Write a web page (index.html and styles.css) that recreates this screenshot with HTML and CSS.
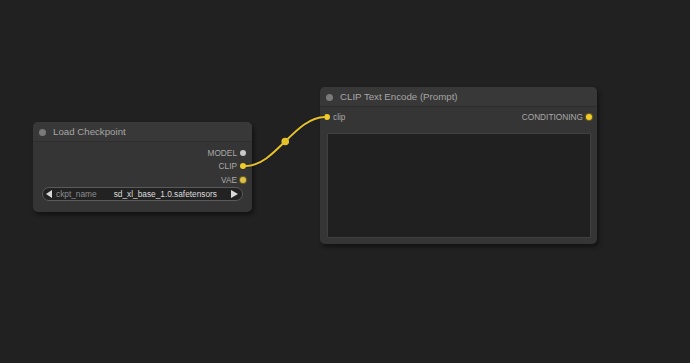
FILE: index.html
```html
<!DOCTYPE html>
<html>
<head>
<meta charset="utf-8">
<link rel="stylesheet" href="styles.css">
</head>
<body>
<div class="canvas">
  <div class="node node-ckpt">
    <div class="title"><span class="title-dot"></span><span class="title-text">Load Checkpoint</span></div>
    <div class="body">
      <div class="outputs">
        <div class="slot out"><span class="label">MODEL</span><span class="dot dot-model"></span></div>
        <div class="slot out"><span class="label">CLIP</span><span class="dot dot-clip"></span></div>
        <div class="slot out"><span class="label">VAE</span><span class="dot dot-vae"></span></div>
      </div>
      <div class="widget">
        <span class="arrow arrow-left"></span>
        <span class="w-name">ckpt_name</span>
        <span class="w-value">sd_xl_base_1.0.safetensors</span>
        <span class="arrow arrow-right"></span>
      </div>
    </div>
  </div>

  <div class="node node-clip">
    <div class="title"><span class="title-dot"></span><span class="title-text">CLIP Text Encode (Prompt)</span></div>
    <div class="body body-clip">
      <div class="io-row">
        <div class="slot in"><span class="dot dot-clip"></span><span class="label">clip</span></div>
        <div class="slot out"><span class="label">CONDITIONING</span><span class="dot dot-cond"></span></div>
      </div>
      <div class="textarea"></div>
    </div>
  </div>

  <svg class="links" width="690" height="363" viewBox="0 0 690 363">
    <path d="M246 166 C 275 166, 295 117, 325 117" fill="none" stroke="#1a1a1a" stroke-width="4" opacity="0.5"/>
    <path d="M246 166 C 275 166, 295 117, 325 117" fill="none" stroke="#e6c229" stroke-width="2"/>
    <circle cx="285.2" cy="141.5" r="3.8" fill="#e6c229"/>
  </svg>
</div>
</body>
</html>
```

FILE: styles.css
```css
html, body {
  margin: 0;
  padding: 0;
  background: #212121;
}

.canvas {
  position: relative;
  width: 690px;
  height: 363px;
  overflow: hidden;
  background-color: #212121;
  font-family: "Liberation Sans", Arial, sans-serif;
}

.links {
  position: absolute;
  left: 0;
  top: 0;
  pointer-events: none;
}

.node {
  position: absolute;
  display: flex;
  flex-direction: column;
  background: #353535;
  border-radius: 5px;
  box-shadow: 2px 3px 4px rgba(0, 0, 0, 0.45);
  box-sizing: border-box;
}

.node-ckpt {
  left: 33px;
  top: 122px;
  width: 219px;
  height: 90px;
}

.node-clip {
  left: 320px;
  top: 87px;
  width: 277px;
  height: 157px;
}

.title {
  height: 20px;
  display: flex;
  align-items: center;
  background: #383838;
  border-radius: 5px 5px 0 0;
  border-bottom: 1px solid #2e2e2e;
  box-sizing: border-box;
  padding-left: 6px;
  padding-top: 1px;
}

.title-dot {
  width: 7px;
  height: 7px;
  border-radius: 50%;
  background: #7a7a7a;
  margin-right: 7px;
}

.title-text {
  color: #a6a6a6;
  font-size: 9.7px;
  line-height: 1;
}

.body {
  display: flex;
  flex-direction: column;
  padding: 4px 8px 0 9px;
}

.outputs {
  display: flex;
  flex-direction: column;
  align-items: flex-end;
}

.slot {
  height: 13.5px;
  display: flex;
  align-items: center;
  font-size: 8.3px;
  color: #a9a9a9;
}

.slot.out .label {
  margin-right: 3px;
}

.slot.in .label {
  margin-left: 3px;
}

.dot {
  width: 6px;
  height: 6px;
  border-radius: 50%;
  display: inline-block;
}

.dot-model {
  background: #c8c8c8;
  margin-right: -2px;
}

.dot-clip {
  background: #f0cb2a;
}

.node-ckpt .dot-clip,
.dot-vae {
  margin-right: -2px;
}

.dot-vae {
  background: #d9c247;
  box-shadow: 0 0 0 1px #6b5e1e;
}

.dot-cond {
  background: #f0cb2a;
  box-shadow: 0 0 0 1px #6b5e1e;
}

.widget {
  margin-top: 0.5px;
  height: 14px;
  box-sizing: border-box;
  border: 1px solid #5a5a5a;
  border-radius: 7px;
  background: #222222;
  display: flex;
  align-items: center;
  padding: 0 4px 0 3px;
  font-size: 8.3px;
  margin-left: 0;
  margin-right: 1px;
}

.arrow {
  width: 0;
  height: 0;
  border-top: 4px solid transparent;
  border-bottom: 4px solid transparent;
}

.arrow-left {
  border-right: 6px solid #d8d8d8;
}

.arrow-right {
  border-left: 7px solid #d8d8d8;
}

.w-name {
  color: #8e8e8e;
  margin-left: 4px;
}

.w-value {
  color: #dcdcdc;
  margin-left: auto;
  margin-right: 14px;
}

.body-clip {
  padding: 3.5px 5px 6px 4px;
  flex: 1;
}

.io-row {
  display: flex;
  justify-content: space-between;
  align-items: center;
}

.textarea {
  margin-top: 9px;
  margin-left: 3px;
  margin-right: 1px;
  flex: 1;
  background: #202020;
  border: 1px solid #404040;
  border-radius: 1px;
}
```
